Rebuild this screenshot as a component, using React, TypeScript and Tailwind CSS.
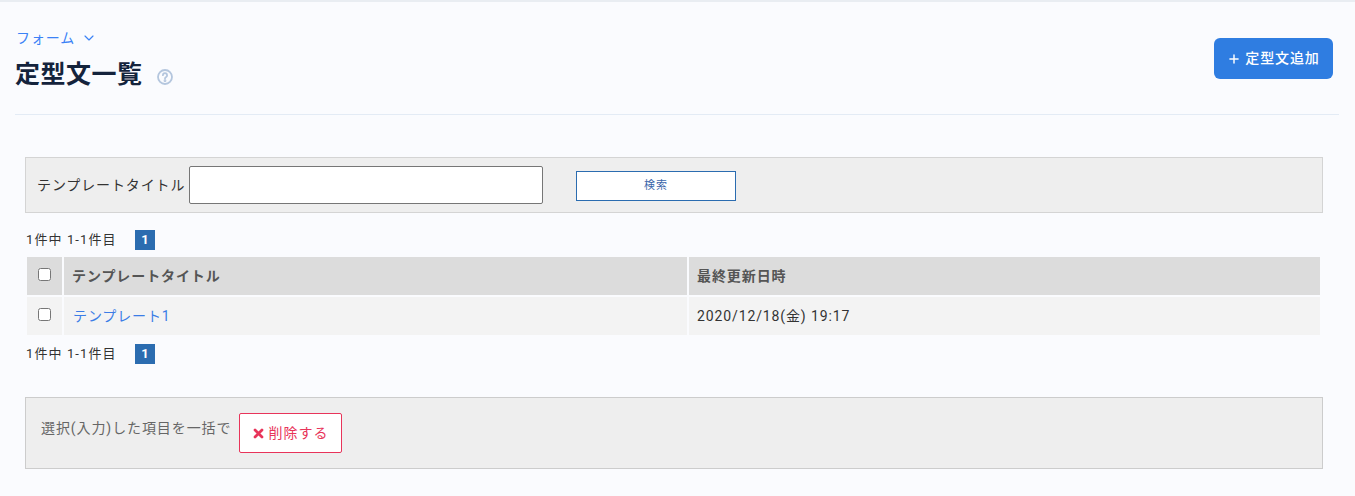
import { ChevronDown, Plus } from "lucide-react"

const font = "font-['Roboto','Noto_Sans_CJK_JP',sans-serif] tracking-[0.055em]"

function Pager() {
  return (
    <div className="flex h-[20px] items-center pl-[26px] text-[13px] leading-[20px] tracking-[0.085em] text-[#333]">
      <span className="w-[109px]">1件中 1-1件目</span>
      <span className="flex h-[20px] w-[20px] items-center justify-center bg-[#2b6cb0] text-[13px] font-bold tracking-normal text-white">1</span>
    </div>
  )
}

export default function App() {
  return (
    <div className={`${font} h-[496px] overflow-hidden border-t-2 border-[#e9edf2] bg-[#fafbfe]`}>
      <header className="ml-[15px] mr-[16px] flex h-[113px] justify-between border-b border-[#e3ebf5]">
        <div className="pt-[26px]">
          <div className="flex items-center gap-[6px] pl-[1px] text-[14px] leading-[20px] text-[#3b82f6]">
            フォーム
            <ChevronDown className="h-[16px] w-[16px]" strokeWidth={1.75} />
          </div>
          <div className="mt-[9px] flex items-center gap-[14px]">
            <h1 className="text-[25px] font-bold leading-[36px] tracking-[0.02em] text-[#14233c]">定型文一覧</h1>
            <svg viewBox="0 0 16 16" className="mt-[4px] h-[16px] w-[16px]" fill="none" stroke="#b4c6de" strokeWidth="1.8">
              <circle cx="8" cy="8" r="7" />
              <path d="M5.9 6.2a2.1 2.1 0 1 1 3.2 1.8c-.7.4-1.1.8-1.1 1.6" strokeLinecap="round" />
              <circle cx="8" cy="11.7" r=".5" fill="#b4c6de" />
            </svg>
          </div>
        </div>
        <button className="mr-[6px] mt-[36px] flex h-[41px] w-[119px] items-center justify-center gap-[4px] rounded-[6px] bg-[#2f7de1] text-[14px] font-medium text-white">
          <Plus className="h-[14px] w-[14px]" strokeWidth={2.5} />
          定型文追加
        </button>
      </header>

      <section className="mx-[25px] mt-[42px] flex h-[56px] w-[1298px] items-center border border-[#d4d4d4] bg-[#eeeeee] pl-[11px]">
        <label className="w-[152px] whitespace-nowrap text-[14px] text-[#333]">テンプレートタイトル</label>
        <input className="h-[38px] w-[354px] rounded-[2px] border border-[#767676] bg-white" />
        <button className="ml-[33px] mt-[2px] h-[30px] w-[160px] border border-[#2b6cb0] bg-white text-[11px] text-[#3a66aa]">検索</button>
      </section>

      <div className="mt-[17px]"><Pager /></div>

      <table className="ml-[25px] mt-[5px] w-[1297px] table-fixed border-separate border-spacing-[2px] text-[14px]">
        <colgroup>
          <col className="w-[35px]" />
          <col className="w-[623px]" />
          <col />
        </colgroup>
        <thead>
          <tr className="h-[38px] bg-[#dcdcdc] text-left font-bold text-[#555]">
            <th className="pb-[5px] text-center font-bold"><input type="checkbox" className="h-[13px] w-[13px] align-middle" /></th>
            <th className="pl-[8px] font-bold tracking-[0.065em]">テンプレートタイトル</th>
            <th className="pl-[8px] font-bold tracking-[0.065em]">最終更新日時</th>
          </tr>
        </thead>
        <tbody>
          <tr className="h-[38px] bg-[#f3f3f3] text-[#333]">
            <td className="pb-[5px] text-center"><input type="checkbox" className="h-[13px] w-[13px] align-middle" /></td>
            <td className="pl-[9px] text-[#3b7de6]">テンプレート1</td>
            <td className="pl-[8px]">2020/12/18(金) 19:17</td>
          </tr>
        </tbody>
      </table>

      <div className="mt-[7px]"><Pager /></div>

      <section className="mx-[25px] mt-[33px] flex h-[72px] w-[1298px] items-start border border-[#cccccc] bg-[#eeeeee] pl-[15px] pt-[15px]">
        <span className="w-[189px] whitespace-nowrap pt-[5px] text-[14px] leading-[20px] tracking-[0.065em] text-[#666]">選択(入力)した項目を一括で</span>
        <button className="ml-[9px] flex h-[40px] w-[103px] items-center justify-center gap-[5px] rounded-[2px] border border-[#e8345a] bg-white text-[14px] tracking-[0.07em] text-[#e8345a]">
          <svg viewBox="0 0 12 12" className="h-[11px] w-[11px]" stroke="#e8345a" strokeWidth="3" strokeLinecap="round">
            <path d="M2.2 2.2 9.8 9.8M9.8 2.2 2.2 9.8" />
          </svg>
          削除する
        </button>
      </section>
    </div>
  )
}
